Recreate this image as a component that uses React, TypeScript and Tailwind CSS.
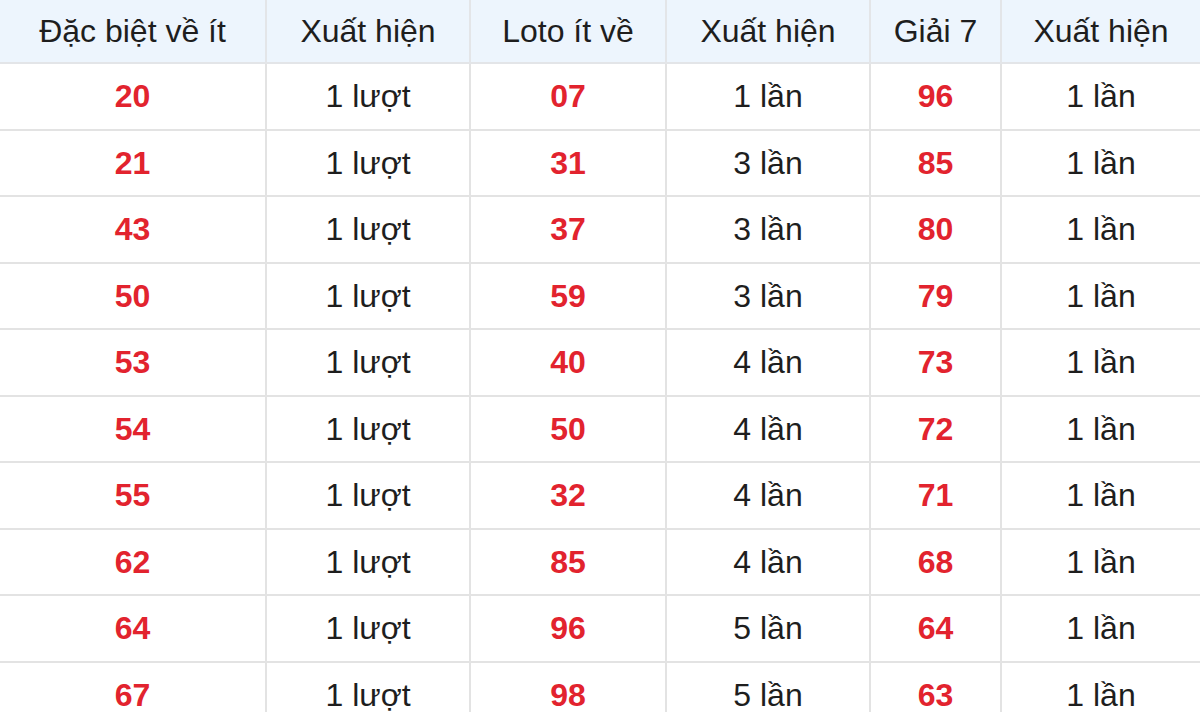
const headers = ['Đặc biệt về ít', 'Xuất hiện', 'Loto ít về', 'Xuất hiện', 'Giải 7', 'Xuất hiện'];
const widths = ['w-[266px]', 'w-[204px]', 'w-[196px]', 'w-[204px]', 'w-[131px]', 'w-[199px]'];

const rows: [string, string, string, string, string, string][] = [
  ['20', '1 lượt', '07', '1 lần', '96', '1 lần'],
  ['21', '1 lượt', '31', '3 lần', '85', '1 lần'],
  ['43', '1 lượt', '37', '3 lần', '80', '1 lần'],
  ['50', '1 lượt', '59', '3 lần', '79', '1 lần'],
  ['53', '1 lượt', '40', '4 lần', '73', '1 lần'],
  ['54', '1 lượt', '50', '4 lần', '72', '1 lần'],
  ['55', '1 lượt', '32', '4 lần', '71', '1 lần'],
  ['62', '1 lượt', '85', '4 lần', '68', '1 lần'],
  ['64', '1 lượt', '96', '5 lần', '64', '1 lần'],
  ['67', '1 lượt', '98', '5 lần', '63', '1 lần'],
];

export default function App() {
  return (
    <div className="w-[1200px] h-[712px] overflow-hidden bg-white font-['Liberation_Sans',Arial,sans-serif] text-[#1e1e1e]">
      <table className="table-fixed border-collapse w-[1200px]">
        <thead>
          <tr className="h-[63px] bg-[#edf5fd]">
            {headers.map((h, i) => (
              <th
                key={i}
                className={`${widths[i]} font-normal text-[32px] text-center border-b-2 border-[#e3e5e8] ${i > 0 ? 'border-l-2' : ''}`}
              >
                {h}
              </th>
            ))}
          </tr>
        </thead>
        <tbody>
          {rows.map((r, ri) => (
            <tr key={ri} className="h-[66.5px]">
              {r.map((c, ci) => (
                <td
                  key={ci}
                  className={`text-center text-[32px] border-b-2 border-[#e3e3e3] ${ci > 0 ? 'border-l-2' : ''} ${
                    ci % 2 === 0 ? 'font-bold text-[#e2232e]' : ''
                  }`}
                >
                  {c}
                </td>
              ))}
            </tr>
          ))}
        </tbody>
      </table>
    </div>
  );
}
